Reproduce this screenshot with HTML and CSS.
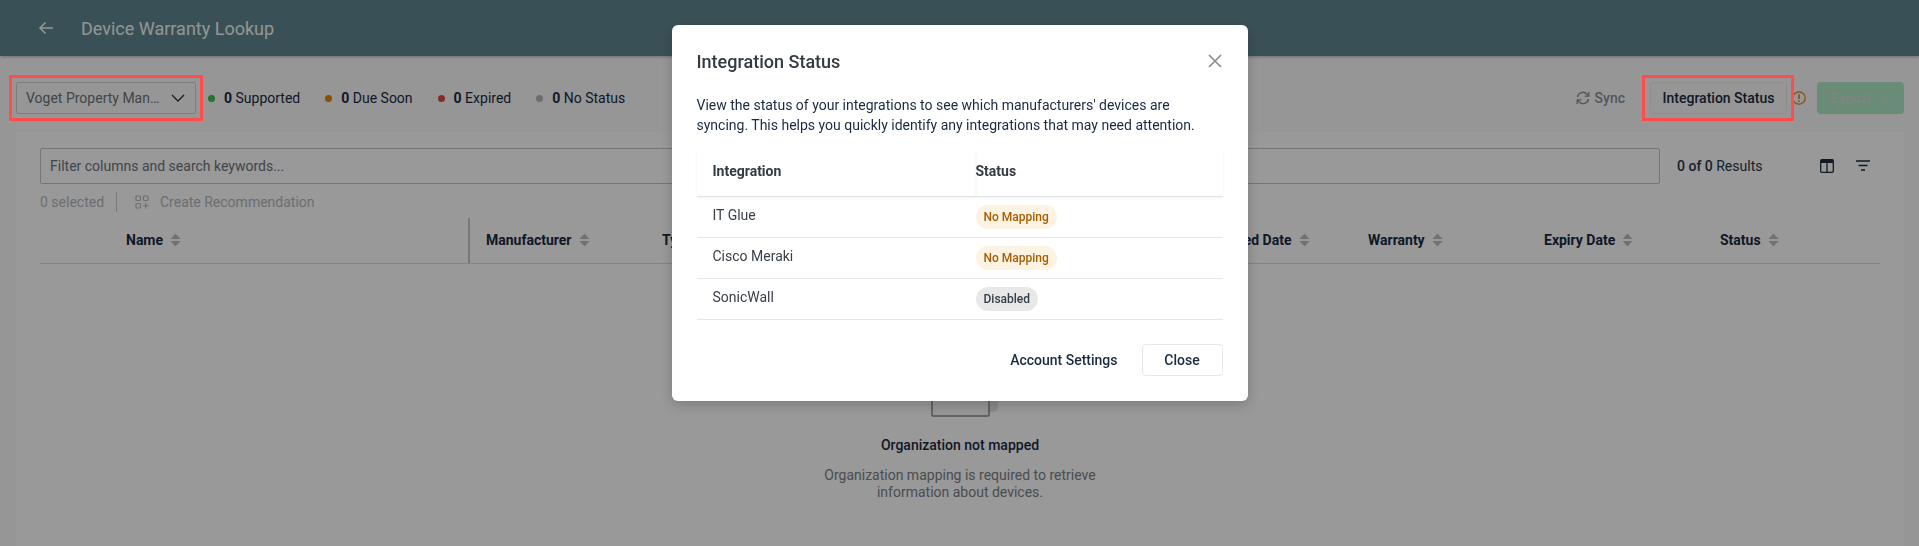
FILE: index.html
```html
<!DOCTYPE html>
<html lang="en">
<head>
    <meta charset="UTF-8">
    <meta name="viewport" content="width=device-width, initial-scale=1.0">
    <title>Device Warranty Lookup</title>
    <link rel="stylesheet" href="styles.css">
</head>
<body>
    <!-- Top bar -->
    <div class="topbar">
        <svg class="back-icon" width="16" height="14" viewBox="0 0 16 14"><path d="M15 7H2M7.500 1.500 2 7l5.500 5.500" fill="none" stroke="currentColor" stroke-width="1.600"/></svg>
        <h1>Device Warranty Lookup</h1>
    </div>

    <!-- Toolbar -->
    <div class="toolbar">
        <div class="org-select">
            <span class="org-name">Voget Property Management</span>
            <svg width="14" height="8" viewBox="0 0 14 8"><path d="M1 1l6 6 6-6" fill="none" stroke="#2b3038" stroke-width="1.300"/></svg>
        </div>
        <div class="counts">
            <div class="count"><span class="dot dot-green"></span><span><b>0</b> Supported</span></div>
            <div class="count"><span class="dot dot-orange"></span><span><b>0</b> Due Soon</span></div>
            <div class="count"><span class="dot dot-red"></span><span><b>0</b> Expired</span></div>
            <div class="count"><span class="dot dot-grey"></span><span><b>0</b> No Status</span></div>
        </div>
        <div class="actions">
            <div class="sync">
                <svg width="14" height="14" viewBox="0 0 14 14" fill="none" stroke="currentColor" stroke-width="1.500"><path d="M1.500 6A5.500 5.500 0 0 1 11 3.200L12.500 4.800"/><path d="M12.500 8A5.500 5.500 0 0 1 3 10.800L1.500 9.200"/><path d="M12.800 1v4.200H8.600" stroke-width="1.300"/><path d="M1.200 13V8.800h4.200" stroke-width="1.300"/></svg>
                Sync
            </div>
            <button class="btn-status">Integration Status</button>
            <svg class="warn-icon" width="14" height="14" viewBox="0 0 14 14"><circle cx="7" cy="7" r="6.200" fill="none" stroke="currentColor" stroke-width="1.200"/><path d="M7 3.200v4.800" stroke="currentColor" stroke-width="1.500"/><circle cx="7" cy="10.200" r="0.900" fill="currentColor"/></svg>
            <button class="btn-export">Export
                <svg width="12" height="7" viewBox="0 0 12 7"><path d="M1 1l5 5 5-5" fill="none" stroke="currentColor" stroke-width="1.300"/></svg>
            </button>
        </div>
    </div>

    <!-- Devices panel -->
    <div class="panel">
        <div class="filter-row">
            <div class="filter-input">Filter columns and search keywords...</div>
            <div class="results"><b>0 of 0</b> Results</div>
            <svg class="tool-icon tool-columns" width="14" height="14" viewBox="0 0 14 14"><rect x="0.700" y="0.700" width="12.600" height="12.600" rx="1" fill="none" stroke="currentColor" stroke-width="1.300"/><rect x="1" y="1" width="12" height="3" fill="currentColor"/><path d="M7 3v10" stroke="currentColor" stroke-width="1.300"/></svg>
            <svg class="tool-icon tool-filter" width="14" height="12" viewBox="0 0 14 12"><path d="M0 1h14M2.500 5.500h9M5 10h4" stroke="currentColor" stroke-width="1.300"/></svg>
        </div>

        <div class="selection-row">
            <span class="selected-count">0 selected</span>
            <span class="divider"></span>
            <svg width="14" height="14" viewBox="0 0 14 14" fill="none" stroke="currentColor" stroke-width="1.200"><rect x="1" y="1" width="4.500" height="4.500" rx="1"/><rect x="8.500" y="1" width="4.500" height="4.500" rx="1"/><rect x="1" y="8.500" width="4.500" height="4.500" rx="1"/><path d="M10.750 8v5.500M8 10.750h5.500"/></svg>
            <span class="create-link">Create Recommendation</span>
        </div>

        <div class="table-head">
            <div class="col col-name">Name <svg class="sort" width="11" height="14" viewBox="0 0 11 14"><path d="M5.500 0.500 10.500 6H0.500zM5.500 13.500 0.500 8h10z"/></svg></div>
            <div class="col">Manufacturer <svg class="sort" width="11" height="14" viewBox="0 0 11 14"><path d="M5.500 0.500 10.500 6H0.500zM5.500 13.500 0.500 8h10z"/></svg></div>
            <div class="col">Type <svg class="sort" width="11" height="14" viewBox="0 0 11 14"><path d="M5.500 0.500 10.500 6H0.500zM5.500 13.500 0.500 8h10z"/></svg></div>
            <div class="col">Model <svg class="sort" width="11" height="14" viewBox="0 0 11 14"><path d="M5.500 0.500 10.500 6H0.500zM5.500 13.500 0.500 8h10z"/></svg></div>
            <div class="col">Serial Number <svg class="sort" width="11" height="14" viewBox="0 0 11 14"><path d="M5.500 0.500 10.500 6H0.500zM5.500 13.500 0.500 8h10z"/></svg></div>
            <div class="col">Purchased Date <svg class="sort" width="11" height="14" viewBox="0 0 11 14"><path d="M5.500 0.500 10.500 6H0.500zM5.500 13.500 0.500 8h10z"/></svg></div>
            <div class="col">Warranty <svg class="sort" width="11" height="14" viewBox="0 0 11 14"><path d="M5.500 0.500 10.500 6H0.500zM5.500 13.500 0.500 8h10z"/></svg></div>
            <div class="col">Expiry Date <svg class="sort" width="11" height="14" viewBox="0 0 11 14"><path d="M5.500 0.500 10.500 6H0.500zM5.500 13.500 0.500 8h10z"/></svg></div>
            <div class="col">Status <svg class="sort" width="11" height="14" viewBox="0 0 11 14"><path d="M5.500 0.500 10.500 6H0.500zM5.500 13.500 0.500 8h10z"/></svg></div>
        </div>

        <div class="empty-state">
            <svg width="80" height="80" viewBox="0 0 80 80">
                <rect x="62" y="58" width="16" height="14" rx="5" fill="#e6e6e6"/>
                <rect x="12" y="20" width="57" height="56" rx="1" fill="#fafafa" stroke="#8a8a8a" stroke-width="1.500"/>
                <circle cx="40" cy="52" r="8" fill="none" stroke="#8a8a8a" stroke-width="1.500"/>
            </svg>
            <div class="empty-title">Organization not mapped</div>
            <div class="empty-text">Organization mapping is required to retrieve<br>information about devices.</div>
        </div>
    </div>

    <!-- Modal -->
    <div class="overlay">
        <div class="modal">
            <div class="modal-head">
                <h2>Integration Status</h2>
                <svg width="14" height="14" viewBox="0 0 14 14"><path d="M1 1l12 12M13 1L1 13" stroke="#8c8c8c" stroke-width="1.700"/></svg>
            </div>
            <p class="modal-text">View the status of your integrations to see which manufacturers' devices are syncing. This helps you quickly identify any integrations that may need attention.</p>
            <table class="status-table">
                <thead>
                    <tr>
                        <th>Integration</th>
                        <th>Status</th>
                    </tr>
                </thead>
                <tbody>
                    <tr>
                        <td><span class="name">IT Glue</span></td>
                        <td><span class="pill pill-warn">No Mapping</span></td>
                    </tr>
                    <tr>
                        <td><span class="name">Cisco Meraki</span></td>
                        <td><span class="pill pill-warn">No Mapping</span></td>
                    </tr>
                    <tr>
                        <td><span class="name">SonicWall</span></td>
                        <td><span class="pill pill-off">Disabled</span></td>
                    </tr>
                </tbody>
            </table>
            <div class="modal-foot">
                <a class="link-settings">Account Settings</a>
                <button class="btn-close">Close</button>
            </div>
        </div>
    </div>

    <!-- Red markers drawn over the screenshot -->
    <div class="marker marker-org"></div>
    <div class="marker marker-status"></div>
</body>
</html>
```

FILE: styles.css
```css
* {
    box-sizing: border-box;
}

body {
    font-family: Roboto, "Liberation Sans", sans-serif;
    font-size: 14px;
    margin: 0;
    height: 100vh;
    overflow: hidden;
    background-color: #fbfbfb;
    color: #1a2a40;
}

.topbar {
    height: 56px;
    background-color: #60868f;
    color: #f4f8f6;
    display: flex;
    align-items: center;
    padding-left: 38px;
    box-shadow: 0 1px 3px rgba(0, 0, 0, 0.25);
}

.back-icon {
    margin-right: 27px;
}

.topbar h1 {
    font-size: 18px;
    font-weight: 400;
    margin: 0;
}

.toolbar {
    display: flex;
    align-items: center;
    height: 32px;
    margin: 26px 15px 18px 16px;
}

.org-select {
    width: 180px;
    height: 32px;
    border: 1px solid #d0d0d0;
    border-radius: 2px;
    display: flex;
    align-items: center;
    justify-content: space-between;
    padding: 0 10px 0 9px;
    color: #6e7277;
}

.org-name {
    width: 136px;
    white-space: nowrap;
    overflow: hidden;
    text-overflow: ellipsis;
}

.counts {
    display: flex;
    gap: 25px;
    margin-left: 12px;
}

.count {
    display: flex;
    align-items: center;
    gap: 9px;
}

.count b {
    font-weight: 700;
}

.dot {
    width: 7px;
    height: 7px;
    border-radius: 50%;
}

.dot-green {
    background-color: #3ebc4b;
}

.dot-orange {
    background-color: #e0860a;
}

.dot-red {
    background-color: #e0493d;
}

.dot-grey {
    background-color: #b0b4bc;
}

.actions {
    margin-left: auto;
    display: flex;
    align-items: center;
}

.sync {
    display: flex;
    align-items: center;
    gap: 5px;
    color: #8a9096;
    font-weight: 500;
    margin-right: 25px;
}

.btn-status {
    width: 137px;
    height: 32px;
    padding: 0;
    font-family: inherit;
    font-size: 14px;
    font-weight: 500;
    color: #1a2a40;
    background-color: #fbfbfb;
    border: 1px solid #ececec;
    border-radius: 4px;
}

.warn-icon {
    color: #d97a1c;
    margin: 0 11px 0 5px;
}

.btn-export {
    width: 87px;
    height: 32px;
    font-family: inherit;
    font-size: 14px;
    font-weight: 700;
    color: #cfe0d4;
    background-color: #b1e8c3;
    border: none;
    border-radius: 4px;
    display: flex;
    align-items: center;
    justify-content: center;
    gap: 7px;
}

.panel {
    margin: 0 15px 0 16px;
    padding: 16px 24px 0;
    height: 414px;
    background-color: #ffffff;
}

.filter-row {
    display: flex;
    align-items: center;
    height: 36px;
}

.filter-input {
    width: 1620px;
    height: 36px;
    line-height: 34px;
    padding-left: 9px;
    border: 1px solid #c4c4c4;
    border-radius: 2px;
    color: #6c7480;
}

.results {
    margin-left: 17px;
    width: 143px;
    color: #26384d;
}

.results b {
    font-weight: 500;
}

.tool-icon {
    color: #1f2d3d;
    flex-shrink: 0;
}

.tool-filter {
    margin-left: 22px;
}

.selection-row {
    display: flex;
    align-items: center;
    height: 20px;
    margin-top: 8px;
    color: #b4b8bc;
}

.selected-count {
    width: 76px;
}

.divider {
    width: 1px;
    height: 20px;
    background-color: #c8c8c8;
    margin-right: 18px;
}

.create-link {
    margin-left: 11px;
}

.table-head {
    display: grid;
    grid-template-columns: 430px 176px 176px 176px 178px 176px 176px 176px 176px;
    height: 46px;
    margin-top: 6px;
    border-bottom: 1px solid #dcdcdc;
    font-weight: 700;
}

.col {
    display: flex;
    align-items: center;
    gap: 7px;
    padding-left: 16px;
    padding-bottom: 2px;
    white-space: nowrap;
}

.col-name {
    padding-left: 86px;
    border-right: 2px solid #c8c8c8;
}

.sort {
    fill: #bdbdbd;
    flex-shrink: 0;
}

.empty-state {
    display: flex;
    flex-direction: column;
    align-items: center;
    padding-top: 76px;
    text-align: center;
}

.empty-title {
    margin-top: 15px;
    line-height: 20px;
    font-weight: 500;
}

.empty-text {
    margin-top: 12px;
    line-height: 17px;
    color: #7c8188;
}

/* Modal */
.overlay {
    position: fixed;
    top: 0;
    left: 0;
    width: 100%;
    height: 100%;
    background-color: rgba(0, 0, 0, 0.4);
    display: flex;
    justify-content: center;
    align-items: flex-start;
    padding-top: 25px;
}

.modal {
    width: 576px;
    height: 376px;
    background: white;
    border-radius: 6px;
    padding: 24px 25px;
    box-shadow: 0 4px 14px rgba(0, 0, 0, 0.2);
    color: #1a2a40;
}

.modal-head {
    display: flex;
    align-items: center;
    justify-content: space-between;
    height: 24px;
    padding-right: 1px;
}

.modal-head h2 {
    font-size: 18px;
    font-weight: 500;
    margin: 0;
    color: #333a42;
}

.modal-text {
    margin: 22px 0 15px;
    line-height: 20px;
}

.status-table {
    width: 526px;
    table-layout: fixed;
    border-collapse: separate;
    border-spacing: 0;
}

.status-table th {
    height: 47px;
    padding: 0 0 4px;
    text-align: left;
    font-weight: 700;
    color: #333a42;
    border-bottom: 1px solid #e2e2e2;
    box-shadow: 0 1px 3px rgba(0, 0, 0, 0.06);
}

.status-table td {
    height: 41px;
    padding: 0;
    border-bottom: 1px solid #e6e6e6;
}

.status-table th:first-child, .status-table td:first-child {
    width: 279px;
    padding-left: 16px;
}

.name {
    display: block;
    color: #3b4148;
    padding-bottom: 4px;
}

.pill {
    display: inline-block;
    height: 24px;
    line-height: 24px;
    padding: 0 8px;
    border-radius: 12px;
    font-size: 12px;
    font-weight: 500;
    vertical-align: middle;
}

.pill-warn {
    background-color: #fdf3e3;
    color: #a85d00;
}

.pill-off {
    background-color: #e8e8e8;
    color: #333d47;
}

.modal-foot {
    display: flex;
    justify-content: flex-end;
    align-items: center;
    gap: 24px;
    margin-top: 24px;
}

.link-settings {
    font-weight: 500;
}

.btn-close {
    width: 81px;
    height: 32px;
    font-family: inherit;
    font-size: 14px;
    font-weight: 500;
    color: #1a2a40;
    background-color: white;
    border: 1px solid #e8e8e8;
    border-radius: 4px;
}

/* Red markers */
.marker {
    position: absolute;
    top: 75px;
    height: 46px;
    border: 3px solid #ff4d4d;
}

.marker-org {
    left: 9px;
    width: 194px;
}

.marker-status {
    left: 1642px;
    width: 152px;
}
```
